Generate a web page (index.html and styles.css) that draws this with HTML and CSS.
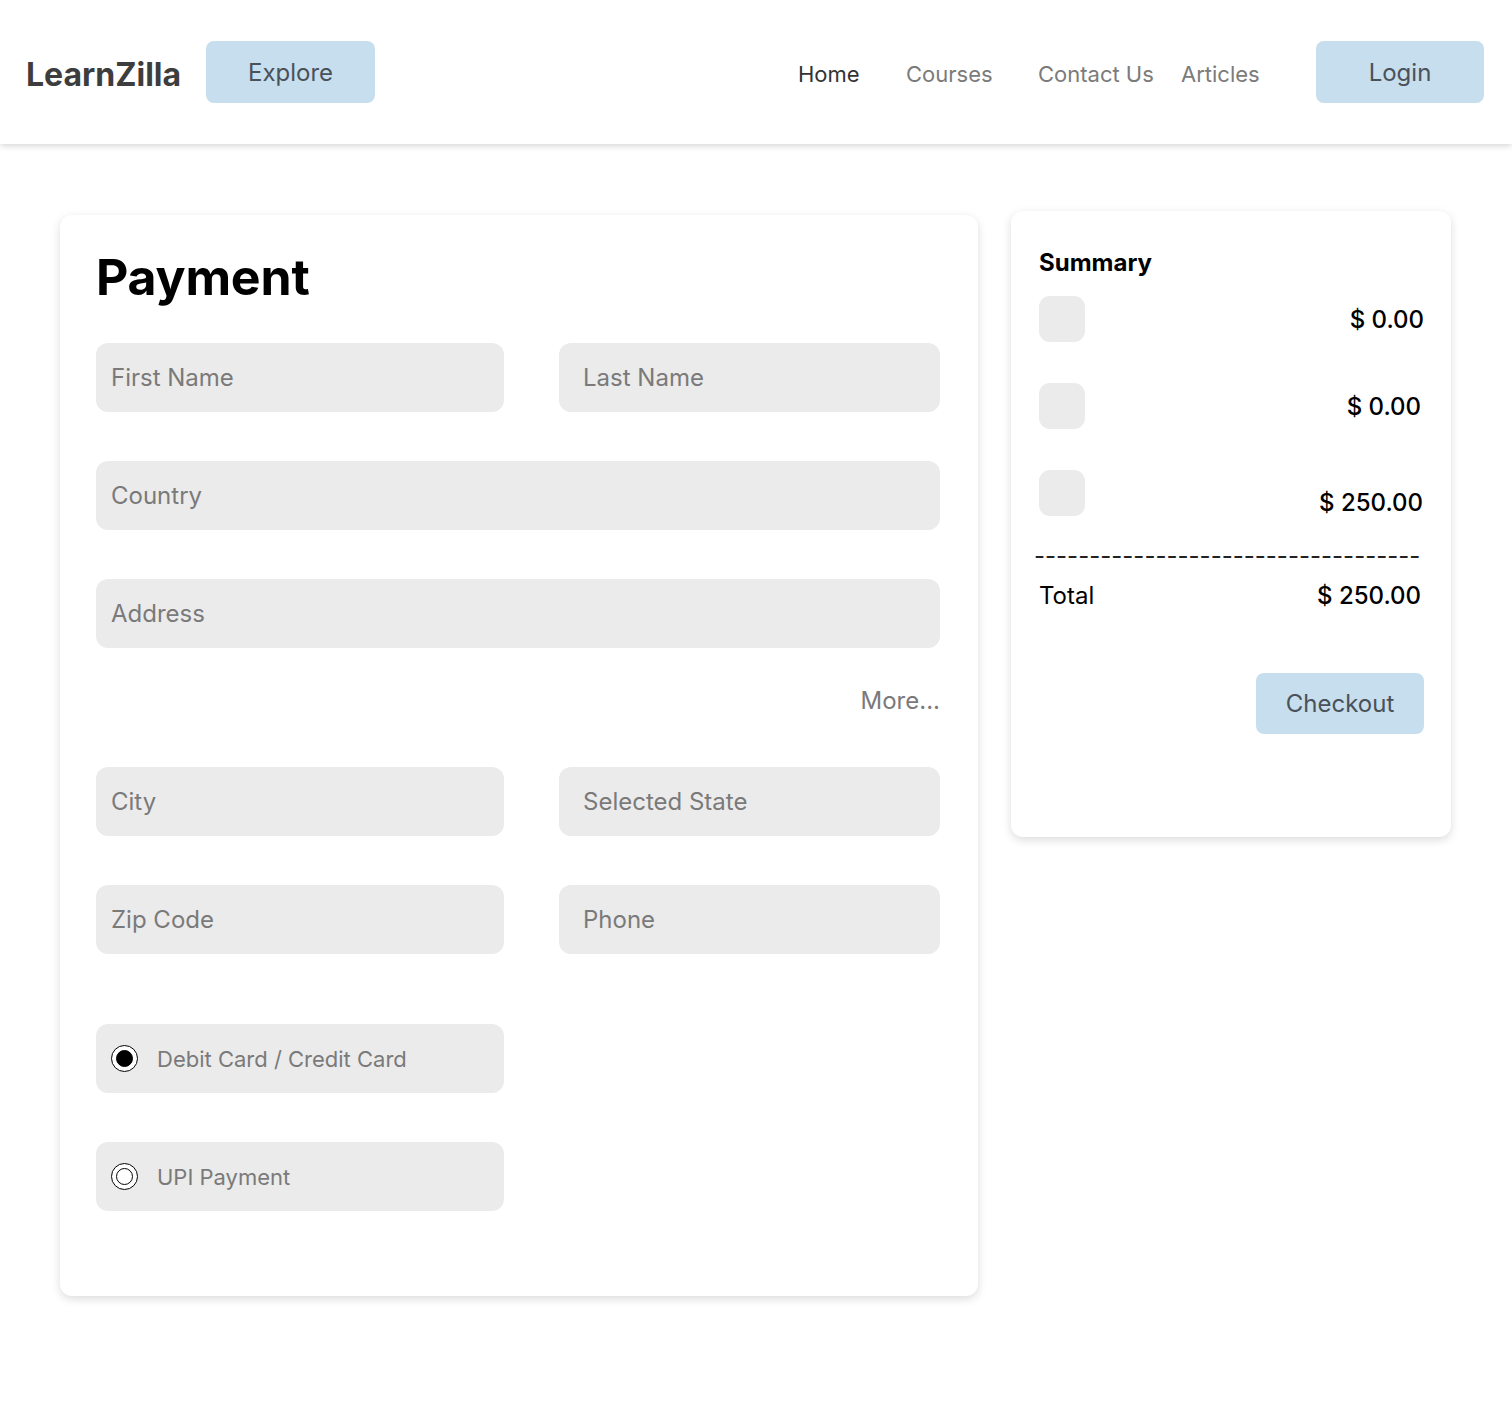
FILE: index.html
```html
<!DOCTYPE html>
<html lang="en">
<head>
<meta charset="utf-8">
<title>LearnZilla - Payment</title>
<link rel="stylesheet" href="styles.css">
</head>
<body>
<header class="topbar">
  <div class="brand">LearnZilla</div>
  <button class="btn btn-explore">Explore</button>
  <nav class="nav">
    <a class="nav-link nav-home active">Home</a>
    <a class="nav-link nav-courses">Courses</a>
    <a class="nav-link nav-contact">Contact Us</a>
    <a class="nav-link nav-articles">Articles</a>
  </nav>
  <button class="btn btn-login">Login</button>
</header>

<main class="page">
  <section class="card payment">
    <h1 class="title">Payment</h1>
    <div class="form">
      <div class="row two">
        <div class="field">First Name</div>
        <div class="field field-right">Last Name</div>
      </div>
      <div class="row">
        <div class="field">Country</div>
      </div>
      <div class="row">
        <div class="field">Address</div>
      </div>
      <div class="more">More...</div>
      <div class="row two">
        <div class="field">City</div>
        <div class="field field-right">Selected State</div>
      </div>
      <div class="row two">
        <div class="field">Zip Code</div>
        <div class="field field-right">Phone</div>
      </div>
      <div class="row two pay-first">
        <div class="field radio-field"><span class="radio checked"></span>Debit Card / Credit Card</div>
      </div>
      <div class="row two">
        <div class="field radio-field"><span class="radio"></span>UPI Payment</div>
      </div>
    </div>
  </section>

  <aside class="card summary">
    <h2 class="sum-title">Summary</h2>
    <div class="items">
      <div class="item"><span class="thumb"></span><span class="price">$ 0.00</span></div>
      <div class="item"><span class="thumb"></span><span class="price p2">$ 0.00</span></div>
      <div class="item"><span class="thumb"></span><span class="price p3">$ 250.00</span></div>
    </div>
    <div class="dashes">-----------------------------------</div>
    <div class="total"><span>Total</span><span class="price">$ 250.00</span></div>
    <div class="actions"><button class="btn btn-checkout">Checkout</button></div>
  </aside>
</main>
</body>
</html>
```

FILE: styles.css
```css
* { box-sizing: border-box; }
body {
  margin: 0;
  background: #fff;
  font-family: Inter, "Noto Sans", "Liberation Sans", sans-serif;
  color: #000;
}

.topbar {
  height: 144px;
  display: flex;
  align-items: center;
  padding: 0 28px 0 26px;
  background: #fff;
  box-shadow: 0 2px 6px rgba(0,0,0,0.16);
  position: relative;
  z-index: 1;
}
.brand {
  font-size: 32px;
  font-weight: 700;
  color: #3d3d3d;
  padding-top: 4px;
  width: 180px;
}
.btn {
  border: none;
  background: #c6deed;
  color: #4a5159;
  font-family: inherit;
  font-size: 24px;
  border-radius: 8px;
  height: 62px;
  width: 169px;
  padding: 0;
  cursor: pointer;
}
.nav {
  display: flex;
  margin-left: auto;
  padding-top: 4px;
}
.nav-link {
  font-size: 22px;
  color: #7b7b7b;
  text-decoration: none;
}
.nav-link.active { color: #333; }
.nav-home { width: 108px; }
.nav-courses { width: 132px; }
.nav-contact { width: 143px; }
.nav-articles { width: 135px; }
.btn-login { width: 168px; }

.page {
  display: flex;
  align-items: flex-start;
  gap: 33px;
  padding: 71px 60px 60px;
}
.card {
  background: #fff;
  border-radius: 12px;
  box-shadow: 0 3px 10px rgba(0,0,0,0.14);
}
.payment {
  width: 918px;
  padding: 31px 38px 85px 36px;
}
.title {
  margin: 0;
  font-size: 50px;
  font-weight: 700;
  line-height: 63px;
  letter-spacing: -0.2px;
}
.form {
  margin-top: 34px;
  display: flex;
  flex-direction: column;
  gap: 49px;
}
.row {
  display: grid;
  grid-template-columns: 1fr;
}
.row.two {
  grid-template-columns: 408px 1fr;
  column-gap: 55px;
}
.field {
  height: 69px;
  background: #ebebeb;
  border-radius: 12px;
  display: flex;
  align-items: center;
  padding-left: 15px;
  font-size: 24px;
  color: #7a7a7a;
}
.field-right { padding-left: 24px; }
.more {
  text-align: right;
  font-size: 24px;
  line-height: 29px;
  color: #7a7a7a;
  margin-top: -11px;
  margin-bottom: 3px;
}
.pay-first { margin-top: 21px; }
.radio-field {
  gap: 19px;
  font-size: 22px;
}
.radio {
  width: 27px;
  height: 27px;
  border: 1.5px solid #000;
  border-radius: 50%;
  background: #fff;
  display: flex;
  align-items: center;
  justify-content: center;
  flex: none;
}
.radio::after {
  content: "";
  width: 17px;
  height: 17px;
  border-radius: 50%;
  border: 1px solid #000;
  box-sizing: border-box;
}
.radio.checked::after { background: #000; }

.summary {
  width: 440px;
  margin-top: -4px;
  padding: 37px 27px 103px 28px;
}
.sum-title {
  margin: 0;
  font-size: 24px;
  font-weight: 700;
  line-height: 29px;
}
.items {
  margin-top: 19px;
  display: flex;
  flex-direction: column;
  gap: 41px;
}
.item {
  display: flex;
  align-items: center;
  justify-content: space-between;
  height: 46px;
}
.thumb {
  width: 46px;
  height: 46px;
  border-radius: 11px;
  background: #ebebeb;
}
.price {
  font-size: 24px;
  font-weight: 500;
}
.p2 { margin-right: 3px; }
.p3 { margin-top: 18px; margin-right: 1px; }
.dashes {
  margin-top: 25px;
  margin-left: -5px;
  font-size: 24px;
  line-height: 29px;
  color: #222;
  white-space: nowrap;
  overflow: hidden;
  width: 390px;
}
.total {
  margin-top: 11px;
  display: flex;
  justify-content: space-between;
  align-items: center;
  font-size: 24px;
  line-height: 29px;
  padding-right: 3px;
}
.actions {
  margin-top: 63px;
  display: flex;
  justify-content: flex-end;
}
.btn-checkout {
  width: 168px;
  height: 61px;
}
```
